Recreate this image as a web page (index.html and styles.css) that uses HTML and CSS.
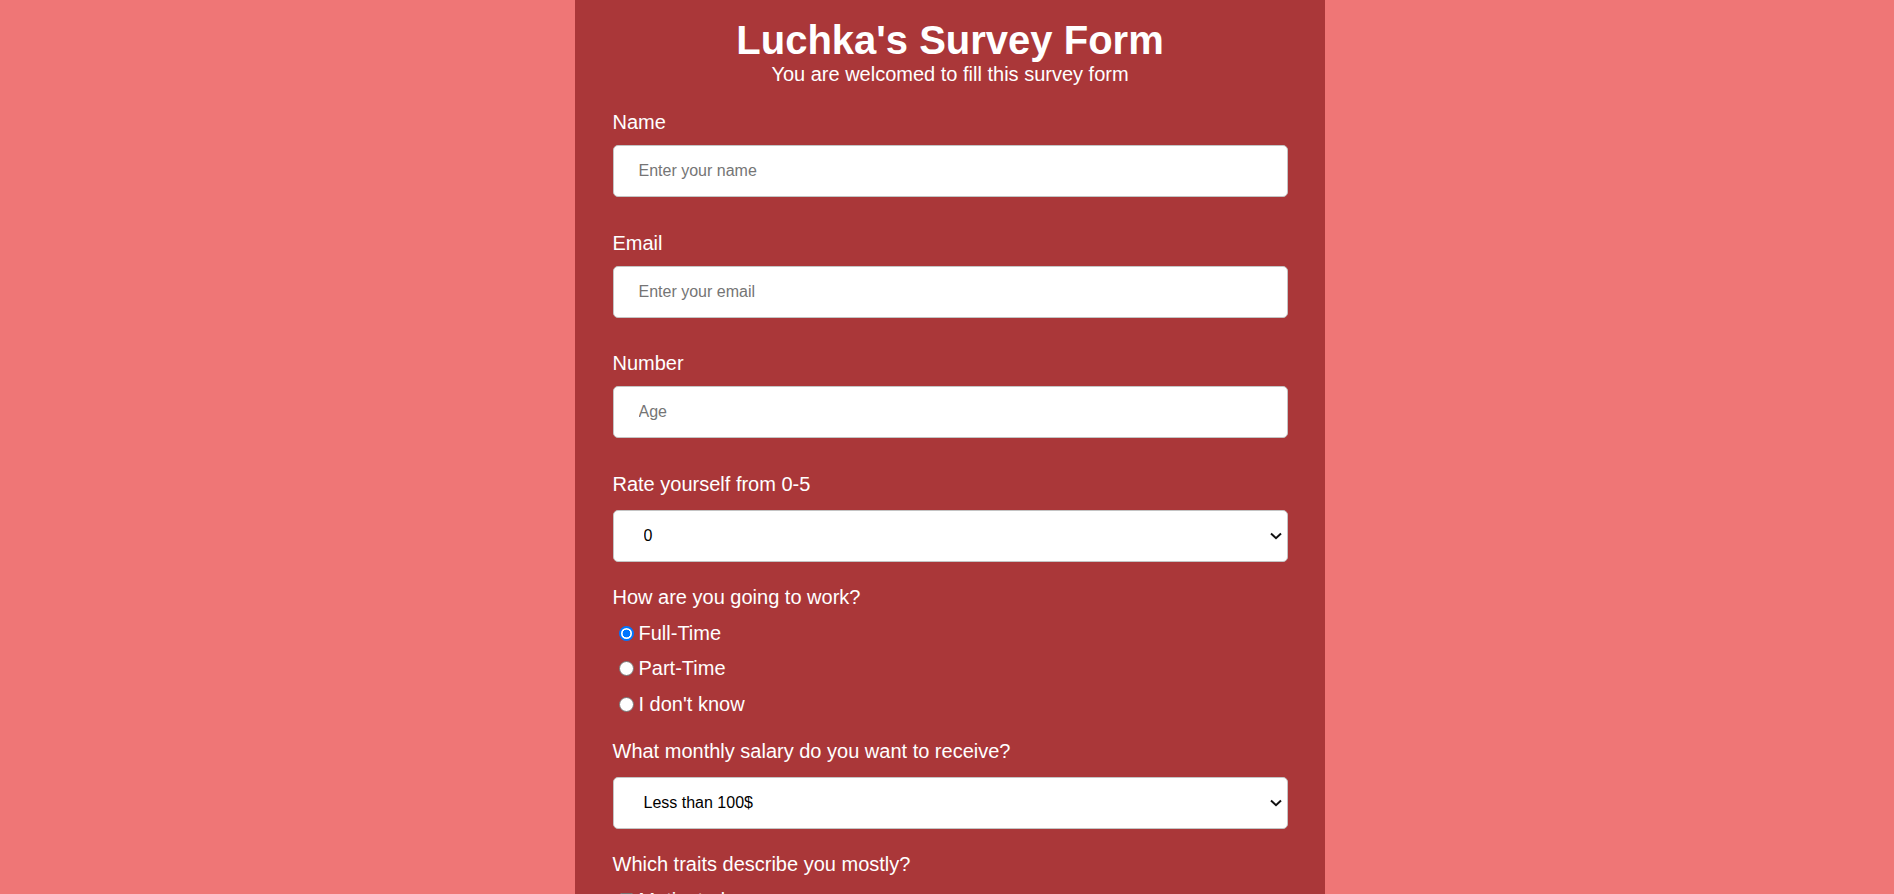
FILE: index.html
```html
<!DOCTYPE html>
<html lang="en">
<head>
<meta charset="utf-8">
<title>Luchka's Survey Form</title>
<link rel="stylesheet" href="styles.css">
</head>
<body>
<main class="container">
  <header class="header">
    <h1 class="title">Luchka's Survey Form</h1>
    <p class="subtitle">You are welcomed to fill this survey form</p>
  </header>
  <form class="survey">
    <div class="group group-input">
      <label class="field-label" for="name">Name</label>
      <input class="field" id="name" type="text" placeholder="Enter your name">
    </div>
    <div class="group group-input">
      <label class="field-label" for="email">Email</label>
      <input class="field" id="email" type="email" placeholder="Enter your email">
    </div>
    <div class="group group-input">
      <label class="field-label" for="number">Number</label>
      <input class="field" id="number" type="number" placeholder="Age">
    </div>
    <div class="group group-select">
      <label class="field-label" for="rate">Rate yourself from 0-5</label>
      <div class="select-wrap">
        <select class="field select" id="rate">
          <option>0</option><option>1</option><option>2</option><option>3</option><option>4</option><option>5</option>
        </select>
        <svg class="chevron" width="12" height="8" viewBox="0 0 12 8" aria-hidden="true"><path d="M1 1.5 L6 6.2 L11 1.5" fill="none" stroke="#111" stroke-width="2"/></svg>
      </div>
    </div>
    <div class="group">
      <p class="field-label">How are you going to work?</p>
      <div class="choices">
        <label class="choice"><input class="radio" type="radio" name="work" checked>Full-Time</label>
        <label class="choice"><input class="radio" type="radio" name="work">Part-Time</label>
        <label class="choice"><input class="radio" type="radio" name="work">I don't know</label>
      </div>
    </div>
    <div class="group group-select">
      <label class="field-label" for="salary">What monthly salary do you want to receive?</label>
      <div class="select-wrap">
        <select class="field select" id="salary">
          <option>Less than 100$</option><option>100$ - 500$</option><option>500$ - 1000$</option><option>More than 1000$</option>
        </select>
        <svg class="chevron" width="12" height="8" viewBox="0 0 12 8" aria-hidden="true"><path d="M1 1.5 L6 6.2 L11 1.5" fill="none" stroke="#111" stroke-width="2"/></svg>
      </div>
    </div>
    <div class="group">
      <p class="field-label">Which traits describe you mostly?</p>
      <div class="choices">
        <label class="choice"><input class="check" type="checkbox">Motivated</label>
        <label class="choice"><input class="check" type="checkbox">Hardworking</label>
        <label class="choice"><input class="check" type="checkbox">Creative</label>
      </div>
    </div>
    <div class="group">
      <label class="field-label" for="comments">Any comments?</label>
      <textarea class="field area" id="comments" placeholder="Enter your comment here..."></textarea>
    </div>
    <button class="submit" type="submit">Submit</button>
  </form>
</main>
</body>
</html>
```

FILE: styles.css
```css
html, body {
  margin: 0;
  padding: 0;
}

body {
  background: #ef7676;
  font-family: "Liberation Sans", Arial, sans-serif;
  color: #ffffff;
  padding-left: 6px;
}

.container {
  width: 750px;
  margin: 0 auto;
  background: #aa3739;
  box-sizing: border-box;
  padding: 17px 37.5px 40px;
}

.header {
  text-align: center;
  margin-bottom: 25px;
}

.title {
  margin: 0;
  font-size: 40px;
  font-weight: bold;
  line-height: 46px;
}

.subtitle {
  margin: 0;
  font-size: 20px;
  line-height: 23px;
}

.survey {
  display: flex;
  flex-direction: column;
}

.group {
  display: flex;
  flex-direction: column;
  margin-bottom: 24.5px;
}

.group-input {
  margin-bottom: 34.7px;
}

.field-label {
  display: block;
  margin: 0;
  font-size: 20px;
  line-height: 23px;
}

.group-input .field-label {
  margin-bottom: 11px;
}

.group-select .field-label {
  margin-bottom: 13.5px;
}

.field {
  box-sizing: border-box;
  width: 100%;
  height: 52px;
  margin: 0;
  padding: 0 25px;
  border: 1px solid #c4c4c4;
  border-radius: 5px;
  background: #ffffff;
  font-family: "Liberation Sans", Arial, sans-serif;
  font-size: 16px;
  color: #000000;
}

.field::placeholder {
  color: #757575;
}

.select-wrap {
  position: relative;
}

.select {
  display: block;
  -webkit-appearance: none;
  appearance: none;
  padding: 0 30px 0 30px;
}

.chevron {
  position: absolute;
  right: 6px;
  top: 22px;
  pointer-events: none;
}

.choices {
  display: flex;
  flex-direction: column;
  gap: 12.3px;
  margin-top: 13px;
}

.choice {
  display: block;
  font-size: 20px;
  line-height: 23px;
}

.radio,
.check {
  -webkit-appearance: none;
  appearance: none;
  box-sizing: border-box;
  width: 15px;
  height: 15px;
  margin: 0 5px 0 6px;
  vertical-align: -1px;
  border: 1px solid #767676;
  background: #ffffff;
}

.radio {
  border-radius: 50%;
}

.radio:checked {
  border: 2px solid #0075ff;
  background: radial-gradient(circle, #0075ff 0 3.6px, #ffffff 4.2px);
}

.check {
  border-radius: 3px;
}

.area {
  height: 120px;
  padding: 15px 25px;
  resize: vertical;
}

.submit {
  align-self: stretch;
  height: 52px;
  border: none;
  border-radius: 5px;
  background: #ef7676;
  color: #fff;
  font-size: 20px;
  font-family: "Liberation Sans", Arial, sans-serif;
}
```
